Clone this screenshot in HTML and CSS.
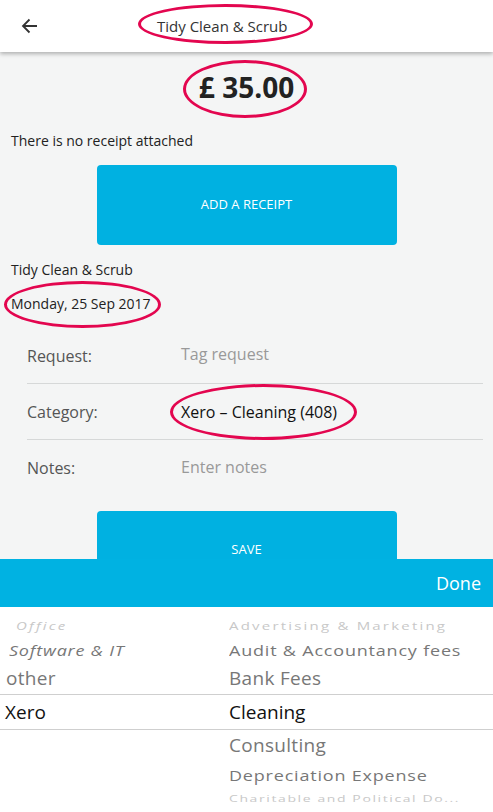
FILE: index.html
```html
<!DOCTYPE html>
<html>

<head>
    <title>Tidy Clean &amp; Scrub</title>
    <link rel="stylesheet" href="styles.css">
</head>

<body>
    <div class="header">
        <span class="back">
            <svg width="18" height="16" viewBox="0 0 18 16">
                <path d="M16 8H2M8.5 1.5L2 8l6.5 6.5" fill="none" stroke="#333" stroke-width="1.8" />
            </svg>
        </span>
        <span class="title">Tidy Clean &amp; Scrub</span>
    </div>

    <div class="content">
        <div class="amount">£ 35.00</div>
        <p class="note">There is no receipt attached</p>
        <button class="big-button" type="button">ADD A RECEIPT</button>
        <p class="merchant">Tidy Clean &amp; Scrub</p>
        <p class="date">Monday, 25 Sep 2017</p>

        <div class="form">
            <div class="row">
                <span class="label">Request:</span>
                <span class="value empty">Tag request</span>
            </div>
            <div class="row">
                <span class="label">Category:</span>
                <span class="value">Xero – Cleaning (408)</span>
            </div>
            <div class="row">
                <span class="label">Notes:</span>
                <span class="value empty">Enter notes</span>
            </div>
        </div>

        <button class="big-button save" type="button">SAVE</button>
    </div>

    <div class="picker">
        <div class="toolbar">
            <span class="done">Done</span>
        </div>
        <div class="wheel">
            <div class="wrow far top">
                <span class="lcol slant">Office</span>
                <span class="rcol">Advertising &amp; Marketing</span>
            </div>
            <div class="wrow near top2">
                <span class="lcol slant">Software &amp; IT</span>
                <span class="rcol">Audit &amp; Accountancy fees</span>
            </div>
            <div class="wrow close above">
                <span class="lcol">other</span>
                <span class="rcol">Bank Fees</span>
            </div>
            <div class="wrow selected">
                <span class="lcol">Xero</span>
                <span class="rcol">Cleaning</span>
            </div>
            <div class="wrow close">
                <span class="lcol"></span>
                <span class="rcol">Consulting</span>
            </div>
            <div class="wrow near">
                <span class="lcol"></span>
                <span class="rcol">Depreciation Expense</span>
            </div>
            <div class="wrow far bottom">
                <span class="lcol"></span>
                <span class="rcol">Charitable and Political Do...</span>
            </div>
        </div>
    </div>

    <!-- red annotation rings drawn on the screenshot -->
    <span class="ring ring-title"></span>
    <span class="ring ring-amount"></span>
    <span class="ring ring-date"></span>
    <span class="ring ring-category"></span>
</body>

</html>
```

FILE: styles.css
```css
/* General */
* {
    box-sizing: border-box;
}

html,
body {
    margin: 0;
    height: 100%;
}

body {
    background-color: #f4f5f5;
    color: #222;
    font-family: "Open Sans", "Liberation Sans", sans-serif;
    overflow: hidden;
}

p {
    margin: 0;
}

/* Header */
.header {
    height: 52px;
    background: #fff;
    display: flex;
    align-items: center;
    box-shadow: 0 2px 4px rgba(0, 0, 0, 0.28);
    position: relative;
    z-index: 1;
}

.back {
    width: 18px;
    height: 16px;
    margin-left: 21px;
    display: flex;
}

.title {
    margin-left: 118px;
    font-size: 15px;
    color: #333;
}

/* Content */
.content {
    display: flex;
    flex-direction: column;
}

.amount {
    margin-top: 17px;
    text-align: center;
    font-size: 28px;
    font-weight: bold;
    line-height: 36px;
    color: #222;
}

.note,
.merchant,
.date {
    font-size: 14px;
    line-height: 20px;
    padding-left: 11px;
}

.note {
    margin-top: 26px;
}

.merchant {
    margin-top: 15px;
}

.date {
    margin-top: 14px;
}

.big-button {
    align-self: center;
    width: 300px;
    height: 80px;
    margin-top: 14px;
    padding-bottom: 4px;
    border: 0;
    border-radius: 4px;
    background: #00b1e1;
    color: #fff;
    font-family: "Open Sans", "Liberation Sans", sans-serif;
    font-size: 13px;
}

.big-button.save {
    margin-top: 15px;
    padding-bottom: 6px;
}

/* Form */
.form {
    margin: 14px 10px 0 27px;
}

.row {
    height: 56px;
    display: flex;
    align-items: center;
    font-size: 16px;
    border-bottom: 1px solid #d6d8d8;
}

.row:last-child {
    border-bottom: 0;
}

.label {
    width: 154px;
    color: #555;
}

.value {
    color: #111;
}

.value.empty {
    color: #999;
    margin-top: -3px;
}

/* Picker */
.picker {
    position: fixed;
    left: 0;
    right: 0;
    bottom: 0;
    height: 253px;
    background: #fff;
}

.toolbar {
    height: 48px;
    background: #00b2e2;
    display: flex;
    align-items: center;
    justify-content: flex-end;
    padding-right: 12px;
}

.done {
    color: #fff;
    font-size: 18px;
}

.wheel {
    padding-top: 8px;
}

.wrow {
    display: flex;
    align-items: center;
    white-space: nowrap;
}

.lcol {
    width: 229px;
}

.wrow.far {
    height: 22px;
    font-size: 15px;
    color: #c8c8c8;
    letter-spacing: 2.2px;
}

.wrow.far span {
    transform: scaleY(0.7);
}

.wrow.far .lcol {
    padding-left: 16px;
}

.wrow.bottom {
    height: 16px;
    font-size: 14px;
    letter-spacing: 1.6px;
}

.wrow.near {
    height: 30px;
    font-size: 18px;
    color: #777;
    letter-spacing: 0.8px;
}

.wrow.near span {
    transform: scaleY(0.85);
}

.wrow.near .lcol {
    padding-left: 9px;
}

.wrow.top2 {
    height: 25px;
}

.wrow.close {
    height: 30px;
    font-size: 19px;
    color: #777;
    letter-spacing: 0.3px;
}

.wrow.close span {
    transform: scaleY(0.93);
}

.wrow.close .lcol {
    padding-left: 6px;
}

.wrow.above {
    height: 32px;
}

.wrow.selected {
    height: 36px;
    font-size: 19px;
    color: #111;
    border-top: 1px solid #cfcfcf;
    border-bottom: 1px solid #cfcfcf;
}

.wrow.selected .lcol {
    padding-left: 5px;
}

.slant {
    font-style: italic;
}

/* Annotation rings */
.ring {
    position: absolute;
    border: 3px solid #e3064f;
    border-radius: 50%;
    z-index: 2;
}

.ring-title {
    left: 138px;
    top: 4px;
    width: 175px;
    height: 40px;
}

.ring-amount {
    left: 183px;
    top: 60px;
    width: 124px;
    height: 58px;
}

.ring-date {
    left: 4px;
    top: 281px;
    width: 157px;
    height: 47px;
}

.ring-category {
    left: 170px;
    top: 384px;
    width: 187px;
    height: 56px;
}
```
